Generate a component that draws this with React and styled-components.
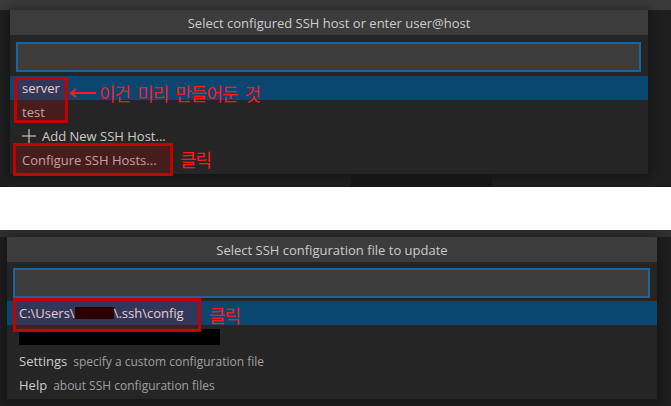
import React from 'react';
import styled, { createGlobalStyle } from 'styled-components';

const GlobalStyle = createGlobalStyle`
  html, body {
    margin: 0;
    padding: 0;
    background: #ffffff;
  }
  body {
    font-family: 'Open Sans', 'Noto Sans', sans-serif;
  }
`;

const Page = styled.div`
  width: 671px;
  display: flex;
  flex-direction: column;
`;

const Shot = styled.section`
  height: ${(p) => p.$h}px;
  background: #1e1e1e;
  display: flex;
  flex-direction: column;
  overflow: hidden;
`;

const Gap = styled.div`
  height: ${(p) => p.$h}px;
  background: #ffffff;
`;

const MenuBar = styled.div`
  height: ${(p) => p.$h}px;
  flex-shrink: 0;
  background: ${(p) => p.$bg};
`;

const Stage = styled.div`
  display: flex;
  padding-left: ${(p) => p.$x}px;
  flex-shrink: 0;
`;

const Footer = styled.div`
  flex: 1;
  display: flex;
`;

const Shade = styled.div`
  margin-left: 351px;
  width: 141px;
  background: #161616;
`;

// quick pick widget
const Picker = styled.div`
  width: ${(p) => p.$w}px;
  background: #252526;
  box-shadow: 0 0 8px 2px rgba(0, 0, 0, 0.36);
  display: flex;
  flex-direction: column;
  padding-bottom: 2px;
`;

const Title = styled.div`
  height: 25px;
  background: #3c3c3c;
  color: #cccccc;
  font-size: 13px;
  display: flex;
  align-items: center;
  justify-content: center;
`;

const InputBox = styled.div`
  margin: ${(p) => p.$mt}px 7px ${(p) => p.$mb}px 6px;
  height: 30px;
  box-sizing: border-box;
  border: 2px solid #1a64a0;
  background: #3c3c3c;
`;

const List = styled.div`
  position: relative;
  display: flex;
  flex-direction: column;
`;

const Row = styled.div`
  height: 24px;
  display: flex;
  align-items: center;
  padding-left: 12px;
  font-size: 13px;
  color: ${(p) => (p.$selected ? '#ffffff' : '#cccccc')};
  background: ${(p) => (p.$selected ? '#094771' : 'transparent')};
  white-space: nowrap;
`;

const Desc = styled.span`
  margin-left: 6px;
  font-size: 12px;
  color: #a0a0a0;
`;

const PlusIcon = styled.svg`
  width: 14px;
  height: 14px;
  margin-right: 6px;
`;

const Hidden = styled.span`
  display: inline-block;
  width: ${(p) => p.$w}px;
  height: ${(p) => p.$h}px;
  background: #000000;
`;

// red annotations drawn over the capture
const MarkBox = styled.div`
  position: absolute;
  left: ${(p) => p.$x}px;
  top: ${(p) => p.$y}px;
  width: ${(p) => p.$w}px;
  height: ${(p) => p.$h}px;
  box-sizing: border-box;
  border: 3px solid #c40000;
  background: rgba(190, 0, 0, 0.22);
`;

const Note = styled.div`
  position: absolute;
  left: ${(p) => p.$x}px;
  top: ${(p) => p.$y}px;
  display: flex;
  align-items: center;
  gap: 3px;
  font-family: 'Noto Sans CJK KR', sans-serif;
  font-size: 18px;
  letter-spacing: -1px;
  word-spacing: 4px;
  line-height: 20px;
  color: #ff1a1a;
  white-space: pre;
`;

const Arrow = () => (
  <svg width="27" height="10" viewBox="0 0 27 10">
    <line x1="2" y1="5" x2="27" y2="5" stroke="#ff1a1a" strokeWidth="2" />
    <polyline points="7,1 2,5 7,9" fill="none" stroke="#ff1a1a" strokeWidth="2" />
  </svg>
);

const Plus = () => (
  <PlusIcon viewBox="0 0 14 14">
    <line x1="7" y1="0" x2="7" y2="14" stroke="#c5c5c5" strokeWidth="1.2" />
    <line x1="0" y1="7" x2="14" y2="7" stroke="#c5c5c5" strokeWidth="1.2" />
  </PlusIcon>
);

const App = () => {
  return (
    <Page>
      <GlobalStyle />
      <Shot $h={187}>
        <MenuBar $h={10} $bg="#3a3a3a" />
        <Stage $x={10}>
          <Picker $w={638}>
            <Title>Select configured SSH host or enter user@host</Title>
            <InputBox $mt={7} $mb={4} />
            <List>
              <Row $selected>server</Row>
              <Row>test</Row>
              <Row>
                <Plus />
                Add New SSH Host...
              </Row>
              <Row>Configure SSH Hosts...</Row>
              <MarkBox $x={4} $y={1} $w={54} $h={46} />
              <MarkBox $x={3} $y={67} $w={160} $h={33} />
              <Note $x={59} $y={7}>
                <Arrow />
                <span>이건 미리 만들어둔 것</span>
              </Note>
              <Note $x={170} $y={73}>
                클릭
              </Note>
            </List>
          </Picker>
        </Stage>
        <Footer>
          <Shade />
        </Footer>
      </Shot>
      <Gap $h={43} />
      <Shot $h={176}>
        <MenuBar $h={7} $bg="#303030" />
        <Stage $x={7}>
          <Picker $w={650}>
            <Title>Select SSH configuration file to update</Title>
            <InputBox $mt={6} $mb={3} />
            <List>
              <Row $selected>
                C:\Users\<Hidden $w={39} $h={12} />\.ssh\config
              </Row>
              <Row>
                <Hidden $w={201} $h={16} />
              </Row>
              <Row>
                Settings<Desc>specify a custom configuration file</Desc>
              </Row>
              <Row>
                Help<Desc>about SSH configuration files</Desc>
              </Row>
              <MarkBox $x={6} $y={-3} $w={188} $h={34} />
              <Note $x={202} $y={4}>
                클릭
              </Note>
            </List>
          </Picker>
        </Stage>
      </Shot>
    </Page>
  );
};

export default App;
